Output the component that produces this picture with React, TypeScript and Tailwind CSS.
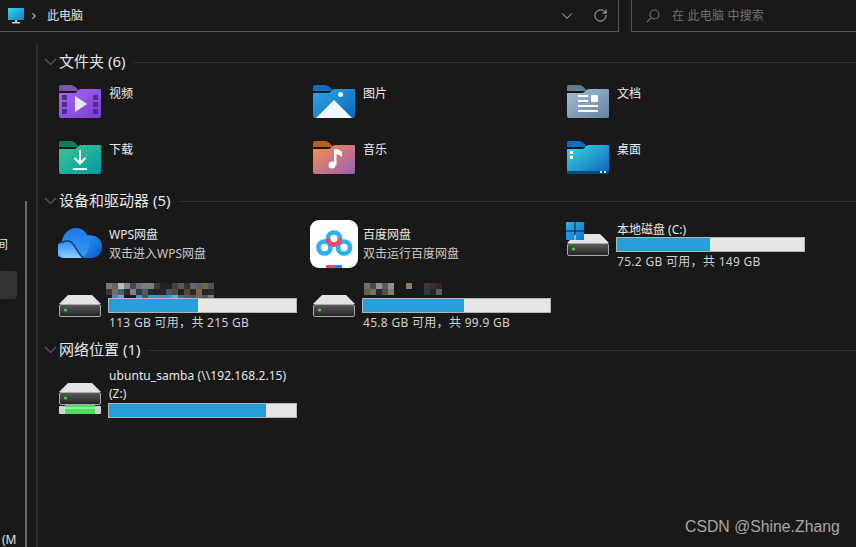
import { ReactNode } from "react";
import { ChevronDown, ChevronRight, RotateCw } from "lucide-react";

const mosaicA = [
  "#777777", "#666666", "#b4c0bc", "#7b8791", "#3d4a60", "#7b6f68", "#78818a", "#71837b", "#3a3a3a",
  "#1e222a", "#1c1e28", "#4a4238", "#5a5a5a", "#3f2f1e", "#5f6a6f", "#4a6478", "#7a6248", "#4d555a",
  "#3a3a36", "#7a6a60", "#44607e", "#2a2a2c", "#77838a", "#2f3a44", "#4a5a66", "#24262a", "#2a1e20",
  "#26262c", "#545460", "#4a4a55", "#1e1e20", "#55493c", "#2c2c2c", "#7b6355", "#2a2624", "#2c2a28",
  "#191919", "#3d8cc4", "#5ea8d4", "#191919", "#191919", "#26a0da", "#555555", "#26a0da", "#26a0da",
  "#5a88a0", "#26a0da", "#6aa8c8", "#5a6a70", "#5a5a5a", "#555555", "#666666", "#555555", "#777777",
];

const mosaicB = [
  "#6e6e66", "#4a4a4a", "#8a929a", "#5e5e5e", "#8a9690", "#191919", "#191919", "#8f7a60", "#191919",
  "#191919", "#4a3030", "#30323a", "#32261f",
  "#665e52", "#7a7060", "#2c2c2c", "#4a4e58", "#8a7666", "#191919", "#191919", "#191919", "#191919",
  "#191919", "#2e3a42", "#26262a", "#5e5a5a",
];

function Mosaic({ cells, columns }: { cells: string[]; columns: "a" | "b" }) {
  return (
    <div className={columns === "a" ? "grid h-[15px] grid-cols-[repeat(18,6px)] grid-rows-[6px_6px_3px] -ml-[2px]" : "grid h-[15px] grid-cols-[repeat(13,6px)] grid-rows-[6px_6px] ml-[2px]"}>
      {cells.map((color, i) => (
        <div key={i} style={{ backgroundColor: color }} />
      ))}
    </div>
  );
}

function FolderIcon({ id, from, to, tab, children }: { id: string; from: string; to: string; tab: string; children?: ReactNode }) {
  return (
    <svg width="42" height="33" viewBox="0 0 42 33" className="shrink-0">
      <defs>
        <linearGradient id={id} x1="0" y1="0" x2="1" y2="1">
          <stop offset="0" stopColor={from} />
          <stop offset="1" stopColor={to} />
        </linearGradient>
      </defs>
      <path d="M0 9V2a2 2 0 0 1 2-2h10q3 0 5 2.5L20 6H0z" fill={tab} />
      <path d="M0 8h15q2 0 4-2.5Q20 4 22 4h19a1 1 0 0 1 1 1v26a2 2 0 0 1-2 2H2a2 2 0 0 1-2-2z" fill={`url(#${id})`} />
      {children}
    </svg>
  );
}

const folders = [
  {
    name: "视频",
    icon: (
      <FolderIcon id="f1" from="#a868f4" to="#7c3cd4" tab="#7a52b0">
        {[10, 17, 24].map((y) => (
          <g key={y} fill="#4f2f8c">
            <rect x="3" y={y} width="5" height="5" />
            <rect x="34" y={y} width="5" height="5" />
          </g>
        ))}
        <path d="M16 11l12 8-12 8z" fill="#efe6fa" />
      </FolderIcon>
    ),
  },
  {
    name: "图片",
    icon: (
      <FolderIcon id="f2" from="#2ca6ea" to="#0a68b8" tab="#0a6cc8">
        <circle cx="27.5" cy="9.5" r="2.5" fill="#e8f4fc" />
        <path d="M21 15l18 18H3z" fill="#eef7fd" />
      </FolderIcon>
    ),
  },
  {
    name: "文档",
    icon: (
      <FolderIcon id="f3" from="#a8bcd2" to="#6484a4" tab="#5f7f8e">
        <g fill="#ffffff">
          <rect x="11" y="10" width="10" height="2" />
          <rect x="11" y="15" width="10" height="2" />
          <rect x="24" y="10" width="7" height="7" rx="1" />
          <rect x="11" y="20" width="20" height="2" />
          <rect x="11" y="25" width="20" height="2" />
        </g>
      </FolderIcon>
    ),
  },
  {
    name: "下载",
    icon: (
      <FolderIcon id="f4" from="#3cc88a" to="#0098aa" tab="#0f7a5c">
        <path d="M21 9v13M15.5 17l5.5 5.500 5.500-5.500" stroke="#ffffff" strokeWidth="2" fill="none" />
        <rect x="14" y="27" width="14" height="2" fill="#ffffff" />
      </FolderIcon>
    ),
  },
  {
    name: "音乐",
    icon: (
      <FolderIcon id="f5" from="#f88e4e" to="#9c60b4" tab="#b8600e">
        <circle cx="19" cy="24" r="3.5" fill="#ffffff" />
        <path d="M21 8h2.5v16H21zM23.5 8q3 .6 5.5 3v5q-2.5-2.5-5.5-3z" fill="#ffffff" />
      </FolderIcon>
    ),
  },
  {
    name: "桌面",
    icon: (
      <FolderIcon id="f6" from="#3cdce2" to="#0a60b8" tab="#0a70cc">
        <path d="M0 30h42v1a2 2 0 0 1-2 2H2a2 2 0 0 1-2-2z" fill="#0a4a80" />
        <rect x="3" y="10" width="3" height="3" fill="#ffffff" />
        <rect x="3" y="15" width="3" height="3" fill="#ffffff" />
        <rect x="33" y="30" width="2" height="2" fill="#cfe6f4" />
        <rect x="37" y="30" width="2" height="2" fill="#cfe6f4" />
      </FolderIcon>
    ),
  },
];

function DriveIcon({ id, network }: { id: string; network?: boolean }) {
  return (
    <svg width="42" height={network ? 31 : 22} viewBox={network ? "0 0 42 31" : "0 0 42 22"} className="block shrink-0">
      <defs>
        <linearGradient id={id} x1="0" y1="0" x2="0" y2="1">
          <stop offset="0" stopColor="#5c5c5c" />
          <stop offset="1" stopColor="#222222" />
        </linearGradient>
      </defs>
      <path d="M9 0h24l9 9H0z" fill="#e2e3e8" />
      <rect x="0.5" y="9.5" width="41" height="12" rx="1.5" fill={`url(#${id})`} stroke="#a8a8a8" />
      <circle cx="6.5" cy="15" r="1.6" fill="#30e040" />
      {network && (
        <>
          <rect x="0" y="23" width="42" height="8" rx="1" fill="#d4d4d4" />
          <rect x="6" y="22" width="30" height="9" fill="#4fdc60" />
          <rect x="6" y="24" width="30" height="2" fill="#8cf09a" />
        </>
      )}
    </svg>
  );
}

function WindowsLogo() {
  return (
    <svg width="18" height="18" viewBox="0 0 18 18" className="absolute -left-[1px] -top-[12px]">
      <defs>
        <linearGradient id="win" x1="0" y1="0" x2="1" y2="1">
          <stop offset="0" stopColor="#2cb0ec" />
          <stop offset="1" stopColor="#0a78d4" />
        </linearGradient>
      </defs>
      <path d="M0 0h8.500v8.500H0zM9.500 0H18v8.500H9.500zM0 9.500h8.500V18H0zM9.500 9.500H18V18H9.500z" fill="url(#win)" />
    </svg>
  );
}

function WpsCloud() {
  return (
    <svg width="44" height="30" viewBox="0 0 44 30" className="block shrink-0">
      <defs>
        <linearGradient id="wpsA" x1="0" y1="0" x2="0" y2="1">
          <stop offset="0" stopColor="#1a78ec" />
          <stop offset="1" stopColor="#3a9cf8" />
        </linearGradient>
        <linearGradient id="wpsB" x1="0" y1="0" x2="1" y2="1">
          <stop offset="0" stopColor="#2e98f4" />
          <stop offset="1" stopColor="#0a5cc8" />
        </linearGradient>
        <linearGradient id="wpsC" x1="0" y1="0" x2="0" y2="1">
          <stop offset="0" stopColor="#2a8cf4" />
          <stop offset="1" stopColor="#8cd0ff" />
        </linearGradient>
      </defs>
      <path d="M28 7.500a10.500 11 0 0 1 5 0A11 11 0 0 1 33 30H24z" fill="url(#wpsB)" />
      <path d="M4 14C4.500 6 11 0 18 0c6 0 11 4 12 10 1 6 2 12-2 16l-4 4H8A8 8 0 0 1 4 14z" fill="url(#wpsA)" />
      <path d="M4 15c2-2 6-3 9-1 4 3 5 9 12 16H8A8 8 0 0 1 4 15z" fill="url(#wpsC)" />
      <path d="M4 15c2-2 6-3 9-1 4 3 5 9 12 16" fill="none" stroke="#123c70" strokeWidth="1.500" />
    </svg>
  );
}

function BaiduLogo() {
  return (
    <svg width="48" height="48" viewBox="0 0 48 48" className="block shrink-0">
      <rect width="48" height="48" rx="9" fill="#ffffff" />
      <g fill="none" strokeWidth="4.700">
        <circle cx="14.500" cy="27.500" r="6" stroke="#2cb0f0" />
        <circle cx="34" cy="27.500" r="6" stroke="#2cb0f0" />
        <circle cx="24" cy="18.500" r="6" stroke="#2cb0f0" />
        <path d="M18 18.500a6 6 0 0 0 12 0" stroke="#f04a64" />
      </g>
      <rect x="16" y="45" width="8" height="3" fill="#f04a64" />
      <rect x="24" y="45" width="8" height="3" fill="#2a80f0" />
    </svg>
  );
}

function UsageBar({ percent }: { percent: number }) {
  return (
    <div className="h-[15px] w-[189px] border border-[#b4b4b4] bg-[#e6e6e6]">
      <div className="h-full bg-[#26a0da]" style={{ width: `${percent}%` }} />
    </div>
  );
}

function SectionHeader({ title, count }: { title: string; count: number }) {
  return (
    <div className="flex h-5 items-center">
      <svg width="13" height="8" viewBox="0 0 13 8" className="shrink-0" fill="none" stroke="#5c5c5c" strokeWidth="1.100">
        <path d="M1 1l5.500 5.500L12 1" />
      </svg>
      <span className="mb-[2px] ml-[2px] text-[15px] leading-[18px] whitespace-nowrap text-[#e6e6e6]">
        {title} ({count})
      </span>
      <div className="ml-[7px] h-px flex-1 bg-[#2e2e2e]" />
    </div>
  );
}

function DriveText({ name, free, total, percent }: { name: ReactNode; free: string; total: string; percent: number }) {
  return (
    <div className="flex flex-col">
      {typeof name === "string" ? <div className="h-4 pl-px text-xs leading-[18px] text-[#e6e6e6]">{name}</div> : name}
      <UsageBar percent={percent} />
      <div className="mt-[2px] pl-px text-xs leading-[15px] tracking-[0.3px] text-[#d0d0d0]">
        {free} 可用，共 {total}
      </div>
    </div>
  );
}

export default function App() {
  return (
    <div className="relative flex h-[547px] w-[856px] flex-col overflow-hidden bg-[#191919] font-['Noto_Sans','Noto_Sans_CJK_SC',sans-serif]">
      {/* Address + search */}
      <div className="flex h-8 shrink-0">
        <div className="flex w-[619px] items-center border-r border-b border-[#555555]">
          <svg width="17" height="16" viewBox="0 0 17 16" className="ml-2 shrink-0">
            <defs>
              <linearGradient id="pc" x1="0" y1="0" x2="1" y2="1">
                <stop offset="0" stopColor="#3cd6ea" />
                <stop offset="1" stopColor="#0a7cc8" />
              </linearGradient>
            </defs>
            <rect width="16" height="12" fill="url(#pc)" />
            <rect x="7" y="12" width="2" height="2" fill="#b8c4cc" />
            <rect x="4" y="14" width="8" height="1.500" fill="#c4ccd4" />
          </svg>
          <ChevronRight className="ml-[4px] text-[#e0e0e0]" size={10} strokeWidth={2.5} />
          <span className="ml-[8px] text-xs text-[#e0e0e0]">此电脑</span>
          <ChevronDown className="ml-auto text-[#cccccc]" size={18} strokeWidth={1.2} />
          <RotateCw className="mr-[10px] ml-[17px] text-[#cccccc]" size={15} strokeWidth={1.4} />
        </div>
        <div className="w-3" />
        <div className="flex flex-1 items-center border-b border-l border-[#555555] pl-[14px]">
          <svg width="14" height="14" viewBox="0 0 14 14" fill="none" stroke="#707070" strokeWidth="1.100" className="shrink-0">
            <circle cx="8.500" cy="5.500" r="4.500" />
            <path d="M5.200 8.800L1 13" />
          </svg>
          <span className="ml-[12px] text-xs tracking-[0.2px] text-[#707070]">在 此电脑 中搜索</span>
        </div>
      </div>

      <div className="flex min-h-0 flex-1">
        {/* Cut-off navigation pane */}
        <div className="flex w-[36px] shrink-0">
          <div className="flex w-[25px] flex-col overflow-hidden text-xs text-[#e0e0e0]">
            <span className="mt-[205px] -ml-1 leading-4">间</span>
            <div className="mt-[18px] h-7 w-[17px] rounded-r-sm bg-[#333333]" />
            <span className="mt-auto ml-[2px] leading-[14px] whitespace-nowrap">(M</span>
          </div>
          <div className="mt-[169px] w-[2px] bg-[#6a6a6a]" />
        </div>
        <div className="mt-[11px] w-[2px] shrink-0 bg-[#2a2a2a]" />

        <div className="min-w-0 flex-1 pt-[20px] pl-[6px]">
          <SectionHeader title="文件夹" count={6} />
          <div className="mt-[13px] ml-[15px] grid grid-cols-[254px_254px_254px] gap-y-[23px]">
            {folders.map((f) => (
              <div key={f.name} className="flex h-[33px]">
                {f.icon}
                <span className="ml-2 pt-[1px] text-xs leading-4 text-[#eeeeee]">{f.name}</span>
              </div>
            ))}
          </div>

          <div className="mt-[17px]">
            <SectionHeader title="设备和驱动器" count={5} />
          </div>
          <div className="mt-[9px] ml-[15px] grid grid-cols-[254px_254px_254px] grid-rows-[49px_47px] gap-y-[14px]">
            <div className="flex items-start">
              <div className="mt-[8px] -ml-px w-[50px]">
                <WpsCloud />
              </div>
              <div className="mt-[5px] flex flex-col pl-[1px] text-xs leading-[19px]">
                <span className="text-[#e6e6e6]">WPS网盘</span>
                <span className="text-[#c8c8c8]">双击进入WPS网盘</span>
              </div>
            </div>
            <div className="flex items-start">
              <div className="mr-[3px] -ml-[3px] w-[49px]">
                <BaiduLogo />
              </div>
              <div className="mt-[5px] flex flex-col pl-[1px] text-xs leading-[19px]">
                <span className="text-[#e6e6e6]">百度网盘</span>
                <span className="text-[#c8c8c8]">双击运行百度网盘</span>
              </div>
            </div>
            <div className="flex items-end">
              <div className="relative mb-[13px] w-[49px]">
                <WindowsLogo />
                <DriveIcon id="d1" />
              </div>
              <DriveText name="本地磁盘 (C:)" free="75.2 GB" total="149 GB" percent={49.5} />
            </div>

            <div className="flex items-start">
              <div className="mt-[12px] w-[49px]">
                <DriveIcon id="d2" />
              </div>
              <DriveText name={<Mosaic cells={mosaicA} columns="a" />} free="113 GB" total="215 GB" percent={47.4} />
            </div>
            <div className="flex items-start">
              <div className="mt-[12px] w-[49px]">
                <DriveIcon id="d3" />
              </div>
              <DriveText name={<Mosaic cells={mosaicB} columns="b" />} free="45.8 GB" total="99.9 GB" percent={54.2} />
            </div>
          </div>

          <div className="mt-[10px]">
            <SectionHeader title="网络位置" count={1} />
          </div>
          <div className="mt-[7px] ml-[15px] flex items-end">
            <div className="mb-[4px] w-[49px]">
              <DriveIcon id="d4" network />
            </div>
            <div className="flex flex-col">
              <div className="pl-px text-xs leading-[18px] tracking-[0.07px] whitespace-nowrap text-[#e6e6e6]">ubuntu_samba (\\192.168.2.15)</div>
              <div className="pl-px text-xs leading-[18px] text-[#e6e6e6]">(Z:)</div>
              <UsageBar percent={84} />
            </div>
          </div>
        </div>
      </div>

      {/* Watermark */}
      <span className="absolute top-[517px] left-[685px] font-['Liberation_Sans',sans-serif] text-[15.8px] leading-5 whitespace-nowrap text-[#a8a8a8]">
        CSDN @Shine.Zhang
      </span>
    </div>
  );
}
